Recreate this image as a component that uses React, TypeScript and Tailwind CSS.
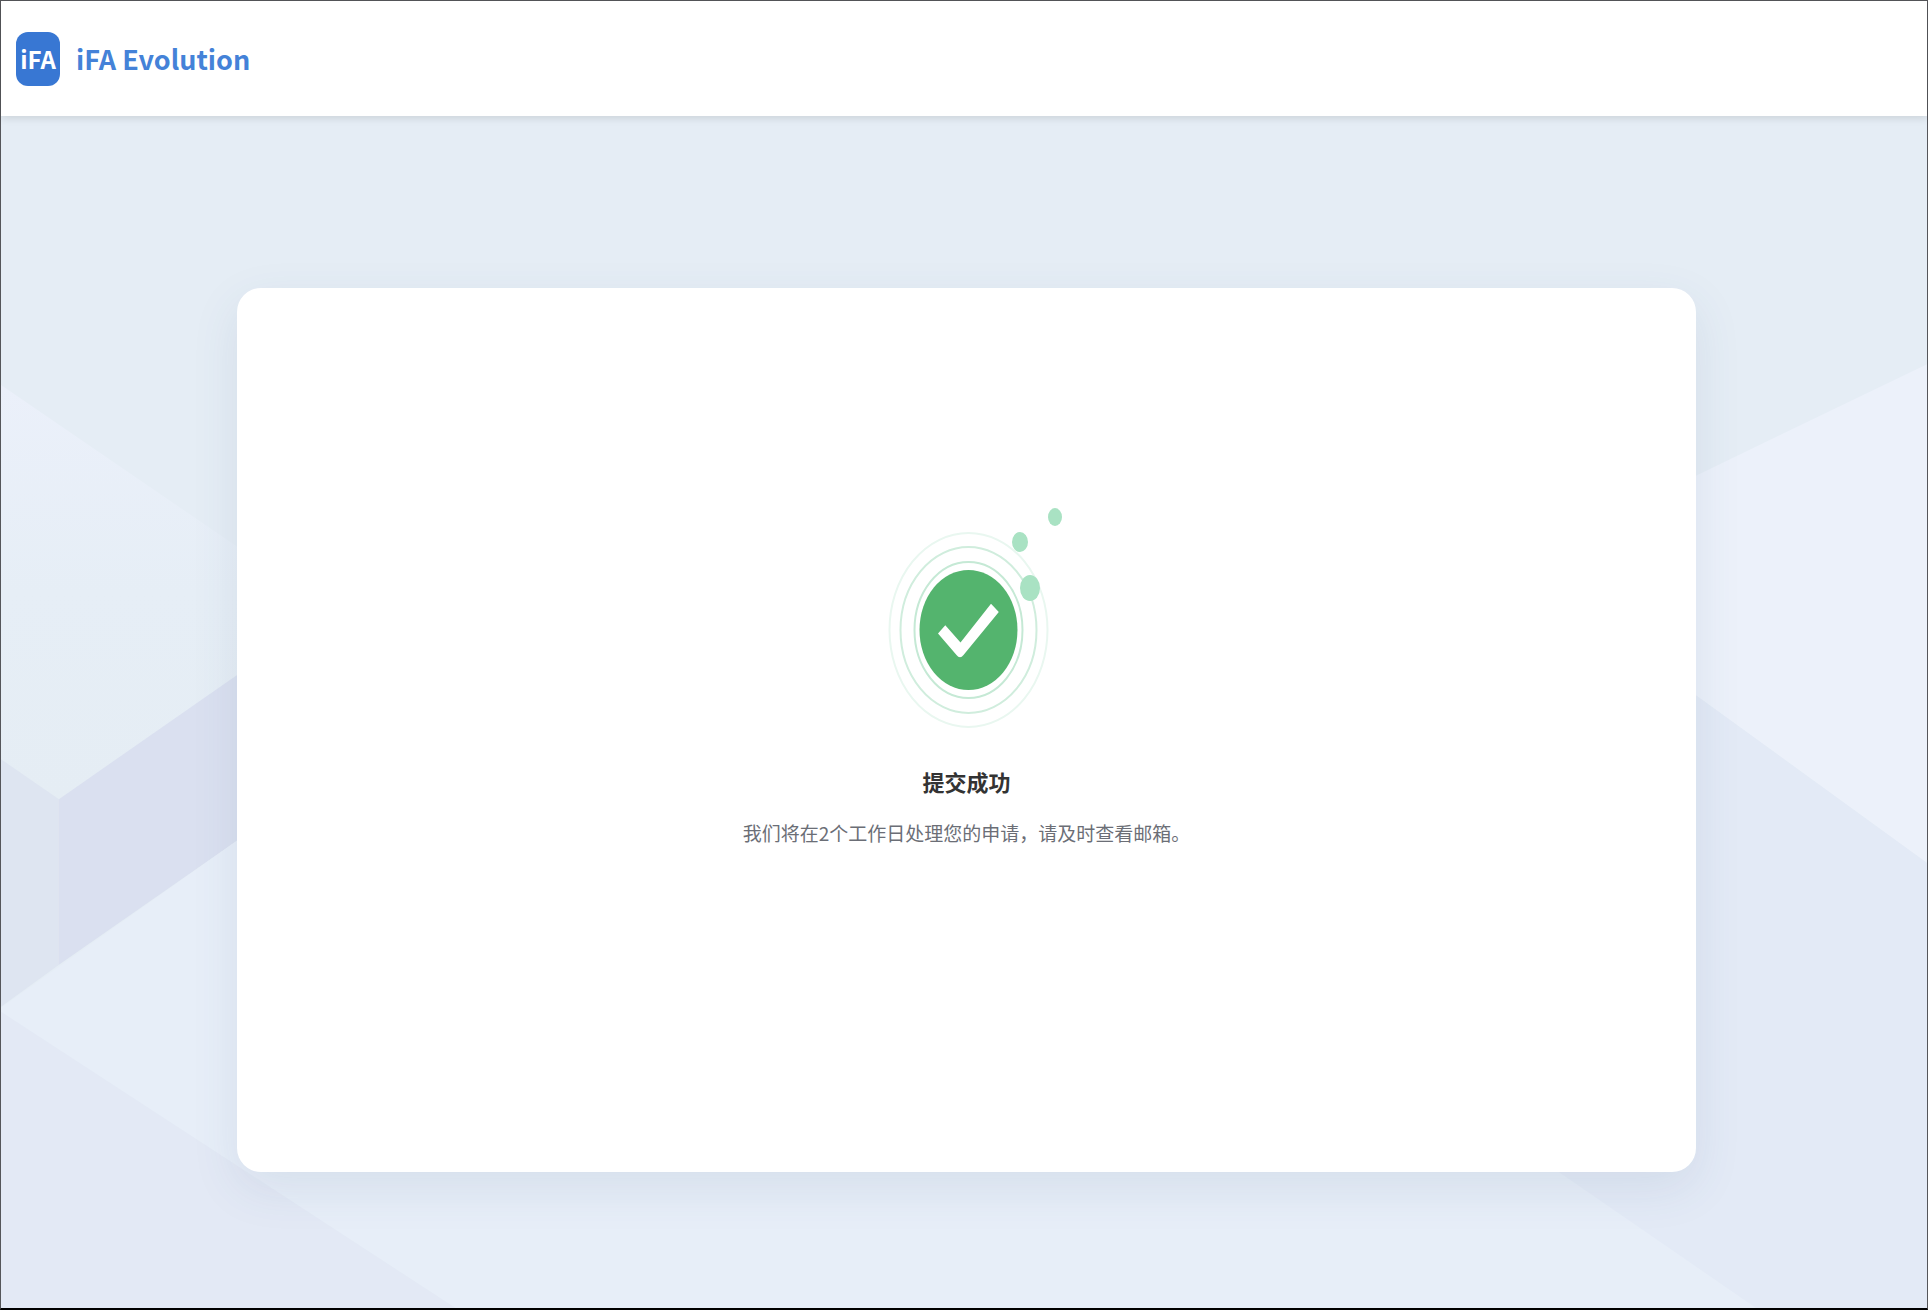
const shapes = [
  { points: "0,385 238,548 238,674 58,800 0,760", fill: "url(#haze)" },
  { points: "0,760 58,800 58,966 0,1008", fill: "#dee5f1" },
  { points: "58,800 240,673 240,839 58,966", fill: "#dae0f0" },
  { points: "0,1009 240,839 1000,839 1559,1172 1757,1310 455,1310 0,1014", fill: "#e7eef8" },
  { points: "0,1013 455,1310 0,1310", fill: "#e3e9f5" },
  { points: "1690,479 1928,364 1928,864 1690,691", fill: "#ecf1fa" },
  { points: "1690,691 1928,864 1928,1310 1757,1310 1551,1168 1551,691", fill: "#e3eaf6" },
];

const rings = [
  { rx: 54, ry: 68, stroke: "#c5e9d5" },
  { rx: 68, ry: 83, stroke: "#d0eddd" },
  { rx: 79, ry: 97, stroke: "#e9f7f0" },
];

const dots = [
  { cx: 160, cy: 62, rx: 8, ry: 10 },
  { cx: 195, cy: 37, rx: 7, ry: 9 },
  { cx: 170, cy: 108, rx: 10, ry: 13 },
];

function Backdrop() {
  return (
    <svg
      className="absolute inset-0 w-full h-full"
      viewBox="0 0 1928 1310"
      preserveAspectRatio="none"
      aria-hidden="true"
    >
      <defs>
        <linearGradient id="haze" x1="0" y1="0" x2="0" y2="1">
          <stop offset="0" stopColor="#ebf0fa" />
          <stop offset="0.5" stopColor="#e6eef6" />
          <stop offset="1" stopColor="#e5edf4" />
        </linearGradient>
      </defs>
      {shapes.map((s) => (
        <polygon key={s.points} points={s.points} fill={s.fill} />
      ))}
    </svg>
  );
}

function SuccessIcon() {
  return (
    <svg width="200" height="240" viewBox="7 19 200 240" fill="none" aria-hidden="true">
      {rings.map((r) => (
        <ellipse key={r.rx} cx="108.5" cy="150" rx={r.rx} ry={r.ry} stroke={r.stroke} strokeWidth="2" />
      ))}
      <ellipse cx="108.5" cy="150" rx="49" ry="60" fill="#54b46e" />
      {dots.map((d) => (
        <ellipse key={d.cx} cx={d.cx} cy={d.cy} rx={d.rx} ry={d.ry} fill="#a9e2c3" />
      ))}
      <path
        d="M78 153.500L85.300 145.300L100.500 162.500L131 123.700L138.800 132L103.500 175Q100 179.500 96.500 175Z"
        fill="#fff"
      />
    </svg>
  );
}

function Header() {
  return (
    <header className="relative z-10 flex items-center gap-4 h-[115px] pl-[15px] bg-white shadow-[0_2px_8px_rgba(0,0,0,0.12)]">
      <div className="flex items-center justify-center w-11 h-[54px] rounded-xl bg-[#3877d3] text-2xl font-bold text-white">
        iFA
      </div>
      <h1 className="text-[27px] leading-9 font-bold text-[#4482d8]">iFA Evolution</h1>
    </header>
  );
}

export default function App() {
  return (
    <div className="relative flex flex-col min-h-screen bg-[#e5edf5] border border-b-2 border-[#55565a] border-b-black font-['Noto_Sans_CJK_SC',sans-serif]">
      <Backdrop />
      <Header />

      <main className="relative flex flex-col flex-1 pt-[172px] pb-[136px] pl-[236px] pr-[231px]">
        {/* Result card */}
        <section className="flex flex-col flex-1 items-center justify-center pb-[114px] rounded-3xl bg-white shadow-[0_16px_48px_rgba(60,90,130,0.1)]">
          <SuccessIcon />
          <h2 className="mt-[26px] text-[22px] leading-8 font-bold text-[#333333]">提交成功</h2>
          <p className="mt-[22px] text-[19px] leading-7 text-[#6b6e76]">
            我们将在2个工作日处理您的申请，请及时查看邮箱。
          </p>
        </section>
      </main>
    </div>
  );
}
